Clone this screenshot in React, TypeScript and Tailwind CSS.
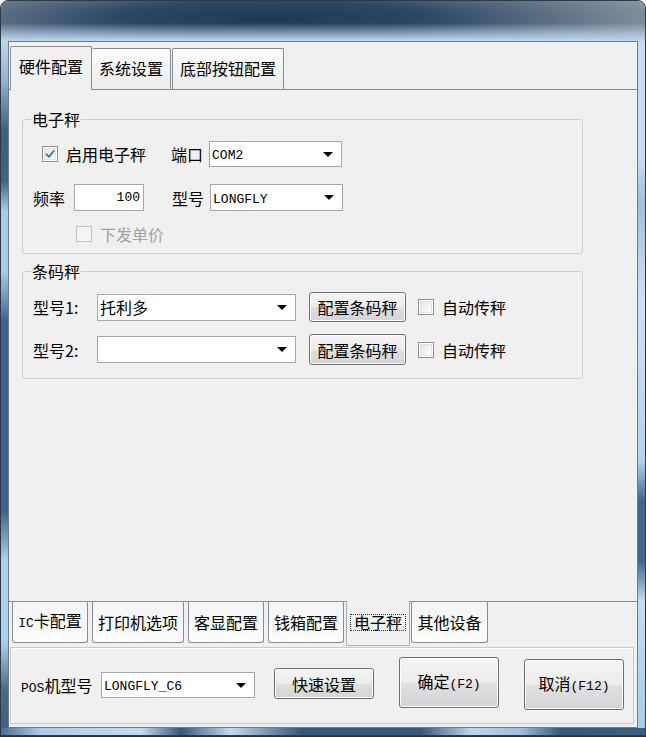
import React from 'react';

const mono = "font-['Liberation_Mono',monospace] text-[13px]";

function Arrow() {
  return (
    <svg width="10" height="5" viewBox="0 0 10 5" className="shrink-0">
      <polygon points="0,0 10,0 5,5" fill="#000" />
    </svg>
  );
}

function Combo({ className, children }: { className: string; children?: React.ReactNode }) {
  return (
    <div className={`flex items-center justify-between border border-[#a7a7a7] bg-white pl-[2px] pr-[8px] ${className}`}>
      <span className="leading-[16px]">{children}</span>
      <Arrow />
    </div>
  );
}

function Btn({ className, children }: { className: string; children: React.ReactNode }) {
  return (
    <button
      type="button"
      className={`flex items-center justify-center rounded-[3px] border border-[#707070] bg-[linear-gradient(to_bottom,#f4f4f4_0%,#ececec_50%,#e0e0e0_51%,#d4d4d4_100%)] leading-[16px] text-black shadow-[inset_0_0_0_1px_#fcfcfc] ${className}`}
    >
      <span className="leading-[16px]">{children}</span>
    </button>
  );
}

function Check({ checked = false, disabled = false }: { checked?: boolean; disabled?: boolean }) {
  return (
    <span
      className={`relative flex h-[16px] w-[16px] shrink-0 items-center justify-center border ${
        disabled ? 'border-[#c6c6c6] bg-[#f4f4f4]' : 'border-[#8e8f8f] bg-white'
      }`}
    >
      {!disabled && <span className="h-[12px] w-[12px] border border-[#e2e2e2] bg-[linear-gradient(135deg,#e6e6e6,#ffffff)]" />}
      {checked && (
        <svg width="16" height="16" viewBox="0 0 16 16" className="absolute left-[-1px] top-[-1px]">
          <path d="M4.5 8.4 L7 10.8 L11.6 5" fill="none" stroke="#3a78d4" strokeWidth="2" strokeLinecap="round" strokeLinejoin="round" />
        </svg>
      )}
    </span>
  );
}

function Group({ title, children }: { title: string; children: React.ReactNode }) {
  return (
    <fieldset className="w-[561px] rounded-[3px] border border-[#cdcdcd]">
      <legend className="ml-[8px] px-[1px] leading-[16px]">{title}</legend>
      {children}
    </fieldset>
  );
}

export default function App() {
  const tabBase = 'flex items-center justify-center border border-[#898c95] leading-[16px]';
  const bottomTab = `${tabBase} h-[41px] rounded-b-[3px] border-t-0 bg-[linear-gradient(to_bottom,#f4f4f4,#fcfcfc)]`;
  return (
    <div className="h-[737px] w-[646px] overflow-hidden bg-[linear-gradient(to_bottom,#ffffff_0%,#ffffff_50%,#2e3033_50%)] font-['Noto_Sans_CJK_SC','Noto_Sans',sans-serif] text-[16px] text-black">
      <div className="flex h-[736px] flex-col overflow-hidden rounded-t-[8px] border border-[#2f3a46] bg-[#a9c9e6]">
        {/* title bar */}
        <div className="h-[40px] shrink-0 bg-[linear-gradient(to_bottom,rgba(190,215,238,0)_55%,#bcd7ef_100%),radial-gradient(ellipse_62%_110%_at_42%_45%,#1e3954_0%,#2c4865_40%,#687a8c_78%,#8795a3_100%)]" />

        <div className="flex h-[687px] shrink-0">
          <div className="w-[7px] shrink-0 bg-[linear-gradient(to_bottom,#bcd7ef_0px,#8fb2d2_40px,#3a5f86_90px,#3c638b_140px,#a6cdf0_170px,#a6cdf0_230px,#3d648c_280px,#3d648c_470px,#a9d2f3_520px,#a9d2f3_600px,#44698f_650px,#3d6289_687px)]" />

          {/* client */}
          <div className="flex w-[630px] shrink-0 flex-col border border-[#6f7b87] bg-[#f0f0f0]">
            {/* top tabs */}
            <div className="flex h-[47px] items-end pl-[1px]">
              <div className={`${tabBase} relative top-[1px] z-10 h-[44px] rounded-t-[2px] border-b-0 bg-[#f0f0f0] px-[8px] pb-[5px]`}>
                硬件配置
              </div>
              <div className={`${tabBase} h-[41px] rounded-t-[2px] border-b-0 border-l-0 bg-[linear-gradient(to_bottom,#fbfbfb,#ececec)] px-[7px] pb-[3px]`}>
                系统设置
              </div>
              <div className={`${tabBase} ml-[1px] h-[41px] rounded-t-[2px] border-b-0 bg-[linear-gradient(to_bottom,#fbfbfb,#ececec)] px-[7px] pb-[3px]`}>
                底部按钮配置
              </div>
            </div>

            {/* main panel */}
            <div className="flex h-[513px] shrink-0 flex-col border-y border-[#898c95] pl-[13px] pt-[21px]">
              <Group title="电子秤">
                <div className="mt-[14px] flex h-[26px] items-center pl-[19px]">
                  <Check checked />
                  <span className="ml-[8px] leading-[16px]">启用电子秤</span>
                  <span className="ml-[25px] leading-[16px]">端口</span>
                  <Combo className="ml-[6px] h-[26px] w-[133px]">
                    <span className={mono}>COM2</span>
                  </Combo>
                </div>
                <div className="mt-[17px] flex h-[27px] items-center pl-[10px]">
                  <span className="leading-[16px]">频率</span>
                  <div className="ml-[9px] flex h-[27px] w-[70px] items-center justify-end border border-[#a7a7a7] bg-white pr-[3px]">
                    <span className={mono}>100</span>
                  </div>
                  <span className="ml-[28px] leading-[16px]">型号</span>
                  <Combo className="ml-[6px] h-[27px] w-[133px]">
                    <span className={mono}>LONGFLY</span>
                  </Combo>
                </div>
                <div className="mt-[15px] flex h-[16px] items-center pl-[53px]">
                  <Check disabled />
                  <span className="ml-[8px] leading-[16px] text-[#a0a0a0]">下发单价</span>
                </div>
                <div className="h-[11px]" />
              </Group>

              <div className="mt-[9px]">
                <Group title="条码秤">
                  <div className="mt-[13px] flex h-[30px] items-center pl-[10px]">
                    <span className="w-[64px] leading-[16px]">型号1:</span>
                    <Combo className="h-[27px] w-[199px]">托利多</Combo>
                    <Btn className="ml-[13px] h-[30px] w-[97px]">配置条码秤</Btn>
                    <span className="ml-[12px]"><Check /></span>
                    <span className="ml-[8px] leading-[16px]">自动传秤</span>
                  </div>
                  <div className="mt-[12px] flex h-[31px] items-center pl-[10px]">
                    <span className="w-[64px] leading-[16px]">型号2:</span>
                    <Combo className="h-[27px] w-[199px]" />
                    <Btn className="ml-[13px] h-[31px] w-[97px]">配置条码秤</Btn>
                    <span className="ml-[12px]"><Check /></span>
                    <span className="ml-[8px] leading-[16px]">自动传秤</span>
                  </div>
                  <div className="h-[13px]" />
                </Group>
              </div>
            </div>

            {/* inner tabs (bottom) */}
            <div className="flex h-[45px] shrink-0 items-start pl-[3px]">
              <div className={`${bottomTab} w-[76px]`}>
                <span className="leading-[16px]"><span className={mono}>IC</span>卡配置</span>
              </div>
              <div className={`${bottomTab} ml-[4px] w-[92px]`}>打印机选项</div>
              <div className={`${bottomTab} ml-[4px] w-[76px]`}>客显配置</div>
              <div className={`${bottomTab} ml-[4px] w-[76px]`}>钱箱配置</div>
              <div className={`${tabBase} relative -mt-[1px] ml-[2px] h-[45px] w-[64px] rounded-b-[2px] border-t-0 border-[#a9acb3] bg-[#f0f0f0] pb-[1px]`}>
                <span className="border border-dotted border-[#333] px-[3px] leading-[15px]">电子秤</span>
              </div>
              <div className={`${bottomTab} ml-[1px] w-[77px]`}>其他设备</div>
            </div>

            {/* bottom panel */}
            <div className="ml-[1px] flex h-[77px] w-[624px] shrink-0 items-start border border-[#c9c9c9] pl-[10px] shadow-[inset_1px_1px_0_#ffffff]">
              <span className="mt-[29px] w-[80px] leading-[16px]">
                <span className={mono}>POS</span>机型号
              </span>
              <Combo className="mt-[24px] h-[26px] w-[154px]">
                <span className={mono}>LONGFLY_C6</span>
              </Combo>
              <Btn className="ml-[19px] mt-[20px] h-[31px] w-[100px]">快速设置</Btn>
              <Btn className="ml-[25px] mt-[9px] h-[51px] w-[100px]">
                确定<span className={mono}>(F2)</span>
              </Btn>
              <Btn className="ml-[25px] mt-[11px] h-[51px] w-[100px]">
                取消<span className={mono}>(F12)</span>
              </Btn>
            </div>
          </div>

          <div className="w-[7px] shrink-0 bg-[linear-gradient(to_bottom,#c4ddf3_0px,#c4ddf3_120px,#9fbfdc_160px,#c9e1f5_260px,#b4d2ee_420px,#3f668e_460px,#3f668e_520px,#c2dcf3_560px,#a9cde9_687px)]" />
        </div>

        {/* bottom frame */}
        <div className="h-[7px] shrink-0 bg-[linear-gradient(to_right,#4a6f95_0px,#a9cdec_40px,#c2dcf2_140px,#34597f_180px,#c0dbf2_230px,#34597f_300px,#35597f_420px,#b9d6f0_470px,#9cc0e0_520px,#34597f_560px,#3a5f85_646px)]" />
      </div>
    </div>
  );
}
